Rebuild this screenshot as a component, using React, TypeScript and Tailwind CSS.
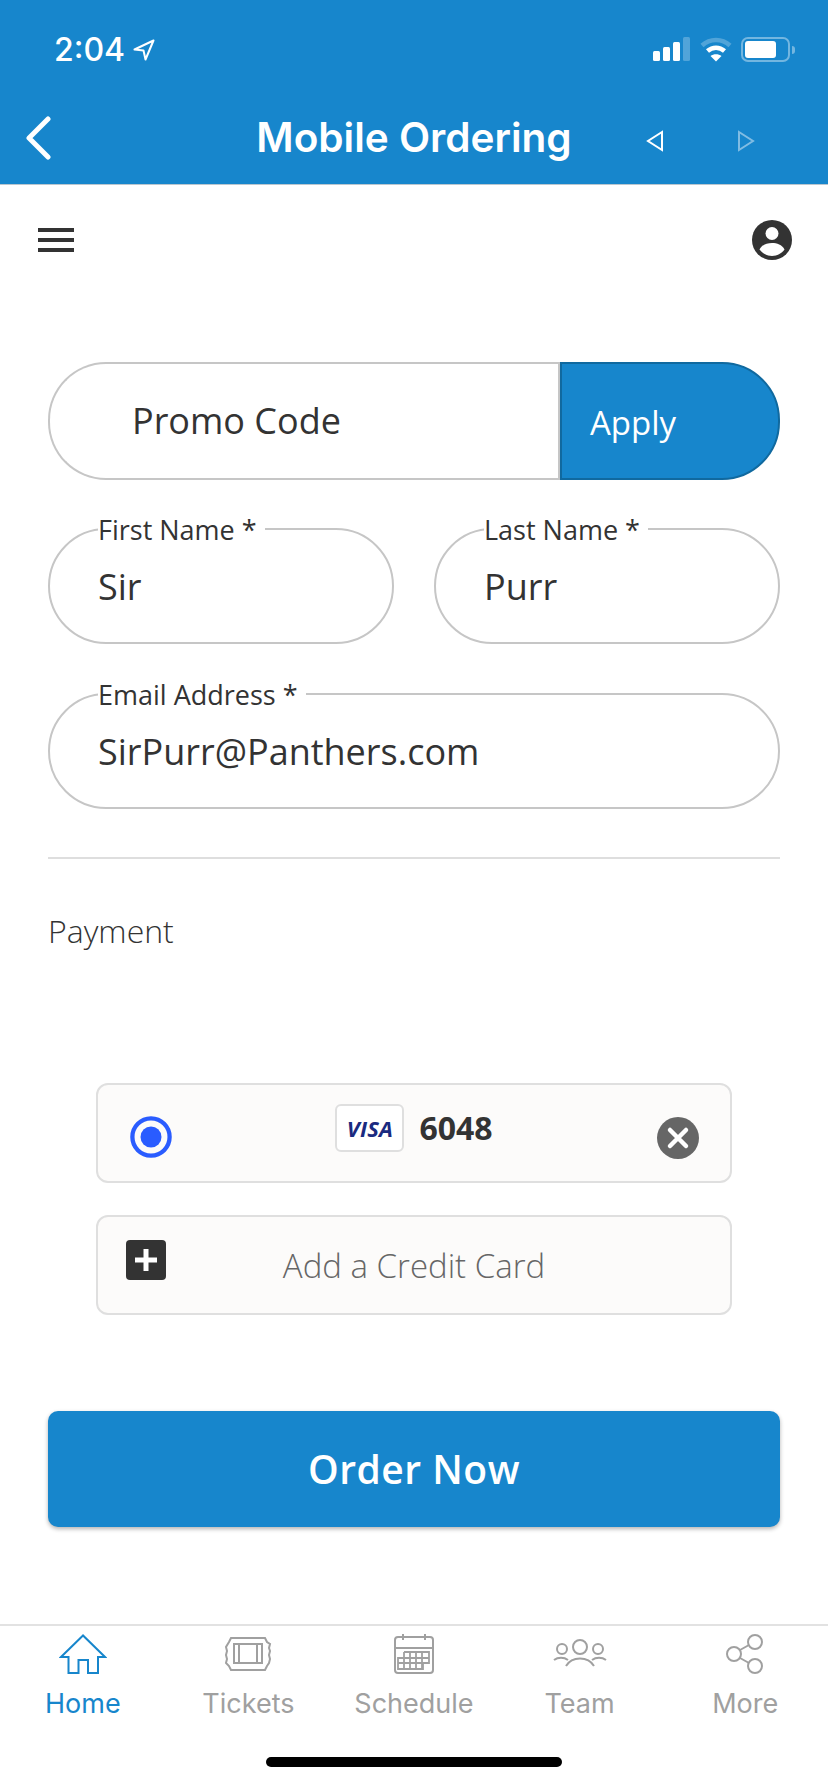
import React from "react";

const OS = "font-['Open_Sans',sans-serif]";

function Field({ label, value, className }: { label: string; value: string; className?: string }) {
  return (
    <div className={`relative flex h-[116px] items-center rounded-[58px] border-2 border-[#c6c6c6] pl-[48px] pt-[2px] ${className ?? ""}`}>
      <span className="absolute left-[48px] top-[-18px] bg-white pr-[8px] text-[27px] leading-[36px] text-[#333]">{label}</span>
      <span className="text-[36px] leading-[48px] text-[#333]">{value}</span>
    </div>
  );
}

function Tab({ label, active, children }: { label: string; active?: boolean; children: React.ReactNode }) {
  return (
    <div className={`flex w-[165.6px] flex-col items-center ${active ? "text-[#1786cc]" : "text-[#a0a0a0]"}`}>
      <div className="flex h-[40px] items-center justify-center">{children}</div>
      <span className="mt-[12px] font-['Inter',sans-serif] text-[27px] leading-[36px]">{label}</span>
    </div>
  );
}

export default function App() {
  return (
    <div className={`flex h-[1792px] w-[828px] flex-col overflow-hidden bg-white ${OS}`}>
      {/* Blue header */}
      <header className="h-[185px] shrink-0 border-b border-[#b9c6cf] bg-[#1786cc] text-white">
        <div className="flex h-[117px] items-start justify-between pt-[37px]">
          <div className="ml-[54px] flex items-center">
            <span className="font-['Inter',sans-serif] text-[32px] font-medium leading-[25px]">2:04</span>
            <svg className="ml-[8px]" width="22" height="22" viewBox="0 0 22 22" fill="none" stroke="#fff" strokeWidth="2" strokeLinejoin="round">
              <path d="M20.5 1.5 1.5 10.5 10.5 11.5 12.5 20.5Z" />
            </svg>
          </div>
          <div className="mr-[33px] flex items-start">
            <svg width="38" height="24" viewBox="0 0 38 24" fill="#fff">
              <rect x="0" y="14" width="7" height="10" rx="1.5" />
              <rect x="10" y="10" width="7" height="14" rx="1.5" />
              <rect x="20" y="5" width="7" height="19" rx="1.5" />
              <rect x="30" y="0" width="7" height="24" rx="1.5" opacity="0.25" />
            </svg>
            <svg className="ml-[9px]" width="32" height="25" viewBox="0 0 32 25" fill="none" stroke="#fff">
              <path d="M2 8.5C10 1 22 1 30 8.5" strokeWidth="4.5" opacity="0.25" />
              <path d="M7.5 14C12.5 9.5 19.5 9.500 24.500 14" strokeWidth="4.5" />
              <path d="M16 24.500 10.500 19C13.500 16.500 18.500 16.500 21.500 19Z" fill="#fff" stroke="none" />
            </svg>
            <div className="ml-[9px] flex items-center">
              <div className="h-[25px] w-[49px] rounded-[7px] border-2 border-white/40 p-[2px]">
                <div className="h-full w-[31px] rounded-[3px] bg-white" />
              </div>
              <div className="ml-[2px] h-[8px] w-[3px] rounded-r-full bg-white/40" />
            </div>
          </div>
        </div>
        <div className="relative flex h-[42px] items-center justify-center">
          <svg className="absolute left-[24px]" width="30" height="44" viewBox="0 0 30 44" fill="none" stroke="#fff" strokeWidth="5" strokeLinecap="round" strokeLinejoin="round">
            <path d="M24 3 5 22 24 41" />
          </svg>
          <span className="font-['Inter',sans-serif] text-[40.5px] font-semibold leading-[48px]">Mobile Ordering</span>
          <svg className="absolute left-[646px] top-[13px]" width="18" height="22" viewBox="0 0 18 22" fill="none" stroke="#fff" strokeWidth="2">
            <path d="M16 2 2 11 16 20Z" />
          </svg>
          <svg className="absolute left-[737px] top-[13px]" width="18" height="22" viewBox="0 0 18 22" fill="none" stroke="#fff" strokeWidth="2" opacity="0.45">
            <path d="M2 2 16 11 2 20Z" />
          </svg>
        </div>
      </header>

      {/* Toolbar */}
      <div className="flex h-[177px] shrink-0 items-start justify-between pl-[38px] pr-[36px] pt-[35px]">
        <div className="mt-[8px] flex w-[36px] flex-col gap-[6px]">
          <div className="h-[4px] bg-[#333]" />
          <div className="h-[4px] bg-[#333]" />
          <div className="h-[4px] bg-[#333]" />
        </div>
        <svg width="40" height="40" viewBox="0 0 40 40">
          <circle cx="20" cy="20" r="20" fill="#333" />
          <circle cx="20" cy="13.500" r="6.500" fill="#fff" />
          <path d="M7.500 29.500C10 24.500 15 23 20 23s10 1.500 12.500 6.500C29.500 33.500 25 36 20 36S10.500 33.500 7.500 29.500Z" fill="#fff" />
        </svg>
      </div>

      {/* Form */}
      <main className="flex shrink-0 flex-col px-[48px]">
        <div className="flex h-[118px]">
          <div className="flex flex-1 items-center rounded-l-[58px] border-2 border-r-0 border-[#c6c6c6] pl-[82px]">
            <span className="text-[36px] leading-[48px] text-[#333]">Promo Code</span>
          </div>
          <div className="flex w-[220px] items-center rounded-r-[58px] border-2 border-[#10699f] bg-[#1786cc] pl-[28px] pt-[4px] shadow-[-2px_0_0_#c6c6c6]">
            <span className="text-[33px] leading-[42px] text-white">Apply</span>
          </div>
        </div>

        <div className="mt-[48px] flex gap-[40px]">
          <Field className="flex-1" label="First Name *" value="Sir" />
          <Field className="flex-1" label="Last Name *" value="Purr" />
        </div>

        <Field className="mt-[49px]" label="Email Address *" value="SirPurr@Panthers.com" />

        <div className="mt-[48px] h-[2px] bg-[#dedede]" />

        <span className="mt-[52px] text-[32px] font-light leading-[40px] text-[#333]">Payment</span>

        {/* Cards */}
        <div className="mt-[132px] flex flex-col gap-[32px] px-[48px]">
          <div className="relative flex h-[100px] items-start justify-center rounded-[12px] border-2 border-[#dfdfdf] bg-[#fcfbfa]">
            <svg className="absolute left-[32px] top-[31px]" width="42" height="42" viewBox="0 0 44 44">
              <circle cx="22" cy="22" r="19.500" fill="none" stroke="#2a5cff" strokeWidth="4.500" />
              <circle cx="22" cy="22" r="11" fill="#2a5cff" />
            </svg>
            <div className="mt-[19px] flex items-center">
              <div className="flex h-[48px] w-[69px] items-center justify-center rounded-[6px] border-2 border-[#dfdfdf] bg-white">
                <span className="font-['Open_Sans',sans-serif] text-[22px] font-bold italic leading-[24px] tracking-[0.2px] text-[#1a2a80]">VISA</span>
              </div>
              <span className="ml-[15px] text-[32px] font-bold leading-[44px] text-[#333]">6048</span>
            </div>
            <svg className="absolute left-[558px] top-[31px]" width="44" height="44" viewBox="0 0 44 44">
              <circle cx="22" cy="22" r="21" fill="#666" />
              <path d="M14 14 30 30M30 14 14 30" stroke="#fff" strokeWidth="4.500" strokeLinecap="round" />
            </svg>
          </div>

          <div className="relative flex h-[100px] items-center justify-center rounded-[12px] border-2 border-[#dfdfdf] bg-[#fcfbfa] pt-[2px]">
            <svg className="absolute left-[27px] top-[22px]" width="42" height="42" viewBox="0 0 42 42">
              <rect x="1" y="1" width="40" height="40" rx="4" fill="#333" />
              <path d="M21 10V32M10 21H32" stroke="#fff" strokeWidth="5" />
            </svg>
            <span className="text-[33px] font-light leading-[44px] text-[#666]">Add a Credit Card</span>
          </div>
        </div>

        <div className="mt-[96px] flex h-[116px] items-center justify-center rounded-[10px] bg-[#1786cc] shadow-[0_2px_4px_rgba(0,0,0,0.3)]">
          <span className="text-[39px] font-semibold leading-[52px] tracking-[0.5px] text-white">Order Now</span>
        </div>
      </main>

      {/* Tab bar */}
      <nav className="mt-auto h-[168px] shrink-0 border-t-2 border-[#e2e2e2]">
        <div className="flex pt-[8px]">
          <Tab label="Home" active>
            <svg width="48" height="40" viewBox="0 0 48 40" fill="none" stroke="currentColor" strokeWidth="2">
              <path d="M24 1.500 2 23H9.500V39H19.500V26H29V39H39V23H46Z" />
            </svg>
          </Tab>
          <Tab label="Tickets">
            <svg width="48" height="34" viewBox="0 0 48 34" fill="none" stroke="currentColor" strokeWidth="2">
              <path d="M7 1H41L43 5 46 7 45 11 46 14 45 18 46 22 45 26 43 29 41 33H7L5 29 2 26 3 22 2 18 3 14 2 10 5 5Z" />
              <rect x="10" y="7" width="28" height="19" />
              <path d="M15 7V26M33 7V26" />
            </svg>
          </Tab>
          <Tab label="Schedule">
            <svg width="40" height="40" viewBox="0 0 40 40" fill="none" stroke="currentColor" strokeWidth="2">
              <rect x="1" y="3" width="38" height="36" rx="3" />
              <path d="M9 0V6M31 0V6M1 14H39" />
              <path d="M10 18H35V29H29V35H4V24H35M4 29H29M10 18V35M16 18V35M22 18V35M28 18V35" strokeWidth="1.800" />
            </svg>
          </Tab>
          <Tab label="Team">
            <svg width="54" height="30" viewBox="0 0 54 30" fill="none" stroke="currentColor" strokeWidth="2">
              <circle cx="27" cy="8" r="7" />
              <circle cx="9" cy="10" r="5" />
              <circle cx="45" cy="10" r="5" />
              <path d="M1 21C5 18 11 18 15 21M39 21C43 18 49 18 53 21M13 27C19 17 35 17 41 27" />
            </svg>
          </Tab>
          <Tab label="More">
            <svg width="38" height="40" viewBox="0 0 38 40" fill="none" stroke="currentColor" strokeWidth="2">
              <circle cx="8" cy="20" r="7" />
              <circle cx="29" cy="8" r="7" />
              <circle cx="29" cy="32" r="7" />
              <path d="M14 16 23 11M14 24 23 29" />
            </svg>
          </Tab>
        </div>
        <div className="mx-auto mt-[35px] h-[10px] w-[296px] rounded-full bg-black" />
      </nav>
    </div>
  );
}
